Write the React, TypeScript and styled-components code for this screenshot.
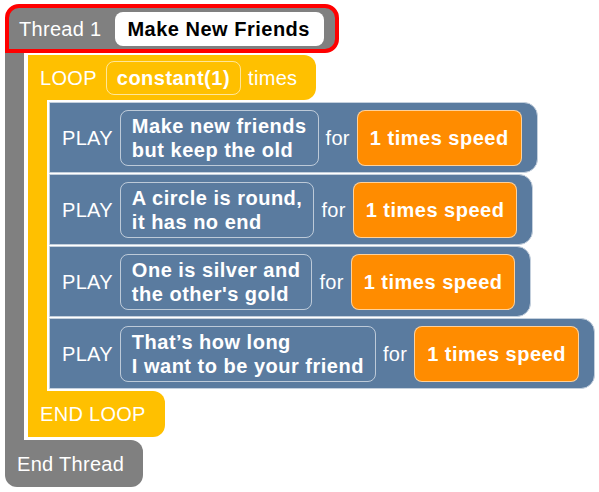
import React from "react";
import styled, { createGlobalStyle } from "styled-components";

const GlobalStyle = createGlobalStyle`
  body {
    margin: 0;
    background: #ffffff;
    font-family: "Liberation Sans", Arial, sans-serif;
  }
`;

const GRAY = "#808080";
const YELLOW = "#ffc000";
const BLUE = "#5a7b9f";
const ORANGE = "#ff8c00";

interface PlayType {
  lines: string[];
  speed: string;
}

const plays: PlayType[] = [
  { lines: ["Make new friends", "but keep the old"], speed: "1 times speed" },
  { lines: ["A circle is round,", "it has no end"], speed: "1 times speed" },
  { lines: ["One is silver and", "the other's gold"], speed: "1 times speed" },
  { lines: ["That\u2019s how long", "I want to be your friend"], speed: "1 times speed" },
];

const Canvas = styled.div`
  padding: 4px 0 0 5px;
`;

const CBlock = styled.div`
  display: flex;
  flex-direction: column;
  align-items: flex-start;
`;

const Label = styled.span`
  color: #ffffff;
  font-size: 20px;
  line-height: 24px;
  letter-spacing: 0.3px;
  white-space: nowrap;
`;

const ThreadHead = styled.div`
  display: flex;
  align-items: center;
  gap: 14px;
  background: ${GRAY};
  border: 4px solid #ff0000;
  border-radius: 14px 14px 14px 0;
  padding: 4px 11px 3px 10px;
`;

const NameInput = styled.div`
  background: #ffffff;
  color: #000000;
  border-radius: 8px;
  padding: 5px 14px 5px 12px;
  font-size: 20px;
  line-height: 24px;
  font-weight: bold;
  letter-spacing: 0.5px;
  white-space: nowrap;
`;

const Body = styled.div<{ $gap: number; $pad: string }>`
  display: flex;
  align-self: stretch;
  gap: ${(p) => p.$gap}px;
  padding: ${(p) => p.$pad};
`;

const Rail = styled.div<{ $bg: string }>`
  width: 19px;
  flex: none;
  background: ${(p) => p.$bg};
  margin: ${(p) => (p.$bg === GRAY ? "-2px 0 -3px" : "-2px 0")};
`;

const Stack = styled.div`
  display: flex;
  flex-direction: column;
  align-items: flex-start;
  gap: 1px;
`;

const LoopHead = styled.div`
  display: flex;
  align-items: center;
  background: ${YELLOW};
  border-radius: 0 12px 12px 0;
  padding: 6px 19px 5px 12px;
`;

const Slot = styled.div<{ $tone: "light" | "orange" }>`
  border: 1px solid rgba(255, 255, 255, 0.6);
  border-radius: 8px;
  background: ${(p) => (p.$tone === "orange" ? ORANGE : "transparent")};
  color: #ffffff;
  font-size: 20px;
  line-height: 24px;
  font-weight: bold;
  letter-spacing: 0.5px;
  white-space: nowrap;
`;

const ValueSlot = styled(Slot)`
  padding: 4px 10px;
  margin: 0 7px 0 9px;
`;

const TextSlot = styled(Slot)`
  padding: 3px 11px 3px 11px;
`;

const SpeedSlot = styled(Slot)`
  display: flex;
  align-items: center;
  height: 56px;
  box-sizing: border-box;
  padding: 0 12px;
`;

const PlayRow = styled.div`
  display: flex;
  align-items: center;
  gap: 7px;
  background: ${BLUE};
  border: 1px solid #c4d0dd;
  border-radius: 0 14px 14px 0;
  padding: 7px 15px 6px 12px;
`;

const Foot = styled.div<{ $bg: string; $h: number; $outer?: boolean }>`
  display: flex;
  align-items: center;
  height: ${(p) => p.$h}px;
  background: ${(p) => p.$bg};
  border-radius: ${(p) => (p.$outer ? "0 12px 12px 12px" : "0 12px 12px 0")};
  padding: 0 19px 0 12px;
`;

const Play: React.FC<{ play: PlayType }> = ({ play }) => (
  <PlayRow>
    <Label>PLAY</Label>
    <TextSlot $tone="light">
      {play.lines.map((l) => (
        <div key={l}>{l}</div>
      ))}
    </TextSlot>
    <Label>for</Label>
    <SpeedSlot $tone="orange">{play.speed}</SpeedSlot>
  </PlayRow>
);

const App: React.FC = () => {
  return (
    <>
      <GlobalStyle />
      <Canvas>
        <CBlock>
          <ThreadHead>
            <Label>Thread 1</Label>
            <NameInput>Make New Friends</NameInput>
          </ThreadHead>
          <Body $gap={4} $pad="2px 0 3px">
            <Rail $bg={GRAY} />
            <CBlock>
              <LoopHead>
                <Label>LOOP</Label>
                <ValueSlot $tone="light">constant(1)</ValueSlot>
                <Label>times</Label>
              </LoopHead>
              <Body $gap={2} $pad="2px 0">
                <Rail $bg={YELLOW} />
                <Stack>
                  {plays.map((p, i) => (
                    <Play key={i} play={p} />
                  ))}
                </Stack>
              </Body>
              <Foot $bg={YELLOW} $h={46}>
                <Label>END LOOP</Label>
              </Foot>
            </CBlock>
          </Body>
          <Foot $bg={GRAY} $h={47} $outer>
            <Label>End Thread</Label>
          </Foot>
        </CBlock>
      </Canvas>
    </>
  );
};

export default App;
